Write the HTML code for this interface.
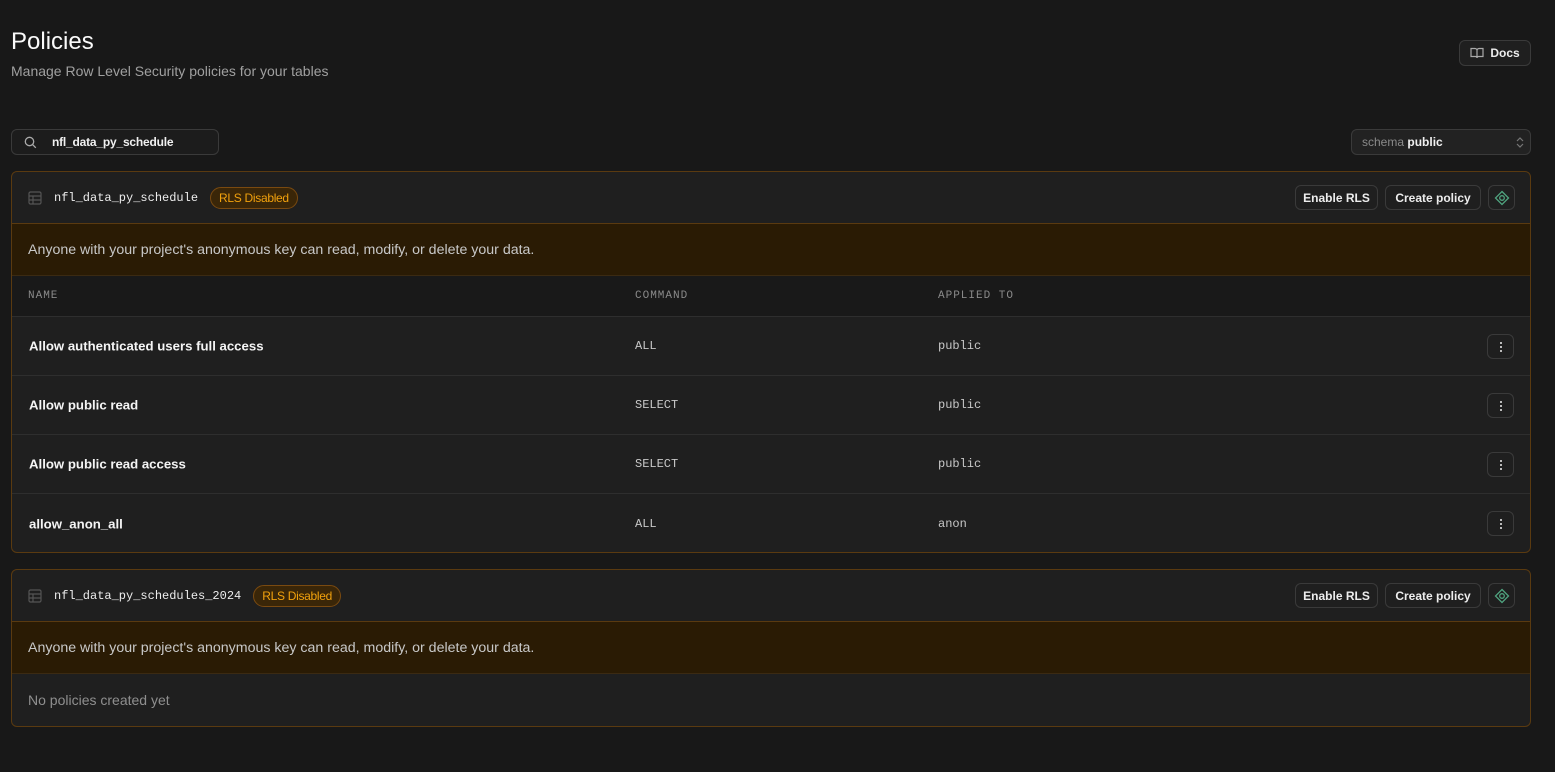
<!DOCTYPE html>
<html><head><meta charset="utf-8"><style>
*{box-sizing:border-box;margin:0;padding:0}
body{width:1555px;height:772px;background:#181818;font-family:"Liberation Sans",sans-serif;color:#ededed;position:relative;overflow:hidden}
.abs{position:absolute}
h1{position:absolute;left:11px;top:28px;font-size:24px;font-weight:400;color:#fafafa}
.sub{left:11px;top:63px;font-size:14px;color:#a0a0a0}
.btn{position:absolute;border:1px solid #3a3a3a;background:#1f1f1f;border-radius:6px;font-size:12px;font-weight:bold;color:#ededed;display:flex;align-items:center;justify-content:center;gap:6px}
.card{position:absolute;left:11px;width:1520px;border:1px solid #5a3a10;border-radius:6px;background:#1f1f1f;overflow:hidden}
.hdr{height:51px;position:relative;display:flex;align-items:center;padding-left:16px}
.tname{font-family:"Liberation Mono",monospace;font-size:12px;color:#ededed;margin-left:12px}
.badge{margin-left:12px;border:1px solid #7a4a10;background:#3a2608;color:#f1a10d;border-radius:12px;font-size:12px;padding:3px 8px;letter-spacing:-0.3px}
.warn{height:53px;background:#2a1b04;border-top:1px solid #5a3a10;border-bottom:1px solid #3b2a12;display:flex;align-items:center;padding-left:16px;font-size:14.2px;color:#c8c8c8}
.th{height:41px;background:#191919;border-bottom:1px solid #2e2e2e;position:relative;font-family:"Liberation Mono",monospace;font-size:11px;color:#8a8a8a;letter-spacing:1px}
.row{height:59px;position:relative;border-bottom:1px solid #2e2e2e}
.row:last-child{border-bottom:none}
.c1{position:absolute;left:17px;top:50%;transform:translateY(-50%);font-size:13.2px;font-weight:bold;color:#f5f5f5}
.c2{position:absolute;left:623px;top:50%;transform:translateY(-50%);font-family:"Liberation Mono",monospace;font-size:12px;color:#c8c8c8}
.c3{position:absolute;left:926px;top:50%;transform:translateY(-50%);font-family:"Liberation Mono",monospace;font-size:12px;color:#c8c8c8}
.dots{position:absolute;left:1475px;top:17px;width:27px;height:25px;border:1px solid #3a3a3a;border-radius:6px;display:flex;flex-direction:column;align-items:center;justify-content:center;gap:2px}
.dots i{width:2px;height:2px;background:#bbb;display:block}
</style></head><body>
<h1>Policies</h1>
<div class="abs sub">Manage Row Level Security policies for your tables</div>
<div class="btn" style="left:1459px;top:40px;width:72px;height:26px"><svg width="14" height="12" viewBox="0 0 14 12" fill="none" stroke="#aaa" stroke-width="1.2"><path d="M1 1.5h4a2 2 0 0 1 2 2V11a1.5 1.5 0 0 0-1.5-1.5H1zM13 1.5H9a2 2 0 0 0-2 2V11a1.5 1.5 0 0 1 1.5-1.5H13z"/></svg>Docs</div>
<div class="abs" style="left:11px;top:129px;width:208px;height:26px;border:1px solid #3a3a3a;border-radius:6px;background:#1c1c1c">
<svg class="abs" style="left:12px;top:6px" width="13" height="13" viewBox="0 0 13 13" fill="none" stroke="#aaa" stroke-width="1.3"><circle cx="5.5" cy="5.5" r="4.2"/><path d="M8.6 8.6l3.2 3.2"/></svg>
<span class="abs" style="left:40px;top:5px;font-size:12px;font-weight:bold;color:#f0f0f0;letter-spacing:-0.2px">nfl_data_py_schedule</span></div>
<div class="abs" style="left:1351px;top:129px;width:180px;height:26px;border:1px solid #3a3a3a;border-radius:6px;background:#222;font-size:12px;padding:5px 10px"><span style="color:#8a8a8a">schema</span> <b style="color:#f0f0f0">public</b>
<svg class="abs" style="right:6px;top:6px" width="8" height="13" viewBox="0 0 8 13" fill="none" stroke="#777" stroke-width="1.2"><path d="M1 5l3-3 3 3M1 8l3 3 3-3"/></svg></div>

<div class="card" style="top:171px;height:382px">
 <div class="hdr"><svg width="14" height="14" viewBox="0 0 14 14" fill="none" stroke="#555" stroke-width="1.2"><rect x="1" y="1" width="12" height="12" rx="1.5"/><path d="M1 5h12M1 9h12M5 5v8"/></svg><span class="tname">nfl_data_py_schedule</span><span class="badge">RLS Disabled</span>
 <div class="btn" style="left:1283px;top:13px;width:83px;height:25px">Enable RLS</div>
 <div class="btn" style="left:1373px;top:13px;width:96px;height:25px">Create policy</div>
 <div class="btn" style="left:1476px;top:13px;width:27px;height:25px"><svg width="16" height="16" viewBox="0 0 16 16" fill="none" stroke="#4fa37f" stroke-width="1.3"><path d="M8 1.5L14.5 8 8 14.5 1.5 8z"/><circle cx="8" cy="8" r="2.3"/></svg></div></div>
 <div class="warn">Anyone with your project's anonymous key can read, modify, or delete your data.</div>
 <div class="th"><span class="abs" style="left:16px;top:14px">NAME</span><span class="abs" style="left:623px;top:14px">COMMAND</span><span class="abs" style="left:926px;top:14px">APPLIED TO</span></div>
 <div class="row"><span class="c1">Allow authenticated users full access</span><span class="c2">ALL</span><span class="c3">public</span><div class="dots"><i></i><i></i><i></i></div></div>
 <div class="row"><span class="c1">Allow public read</span><span class="c2">SELECT</span><span class="c3">public</span><div class="dots"><i></i><i></i><i></i></div></div>
 <div class="row"><span class="c1">Allow public read access</span><span class="c2">SELECT</span><span class="c3">public</span><div class="dots"><i></i><i></i><i></i></div></div>
 <div class="row"><span class="c1">allow_anon_all</span><span class="c2">ALL</span><span class="c3">anon</span><div class="dots"><i></i><i></i><i></i></div></div>
</div>

<div class="card" style="top:569px;height:158px">
 <div class="hdr"><svg width="14" height="14" viewBox="0 0 14 14" fill="none" stroke="#555" stroke-width="1.2"><rect x="1" y="1" width="12" height="12" rx="1.5"/><path d="M1 5h12M1 9h12M5 5v8"/></svg><span class="tname">nfl_data_py_schedules_2024</span><span class="badge">RLS Disabled</span>
 <div class="btn" style="left:1283px;top:13px;width:83px;height:25px">Enable RLS</div>
 <div class="btn" style="left:1373px;top:13px;width:96px;height:25px">Create policy</div>
 <div class="btn" style="left:1476px;top:13px;width:27px;height:25px"><svg width="16" height="16" viewBox="0 0 16 16" fill="none" stroke="#4fa37f" stroke-width="1.3"><path d="M8 1.5L14.5 8 8 14.5 1.5 8z"/><circle cx="8" cy="8" r="2.3"/></svg></div></div>
 <div class="warn">Anyone with your project's anonymous key can read, modify, or delete your data.</div>
 <div style="height:52px;display:flex;align-items:center;padding-left:16px;font-size:14px;color:#8f8f8f">No policies created yet</div>
</div>
</body></html>
